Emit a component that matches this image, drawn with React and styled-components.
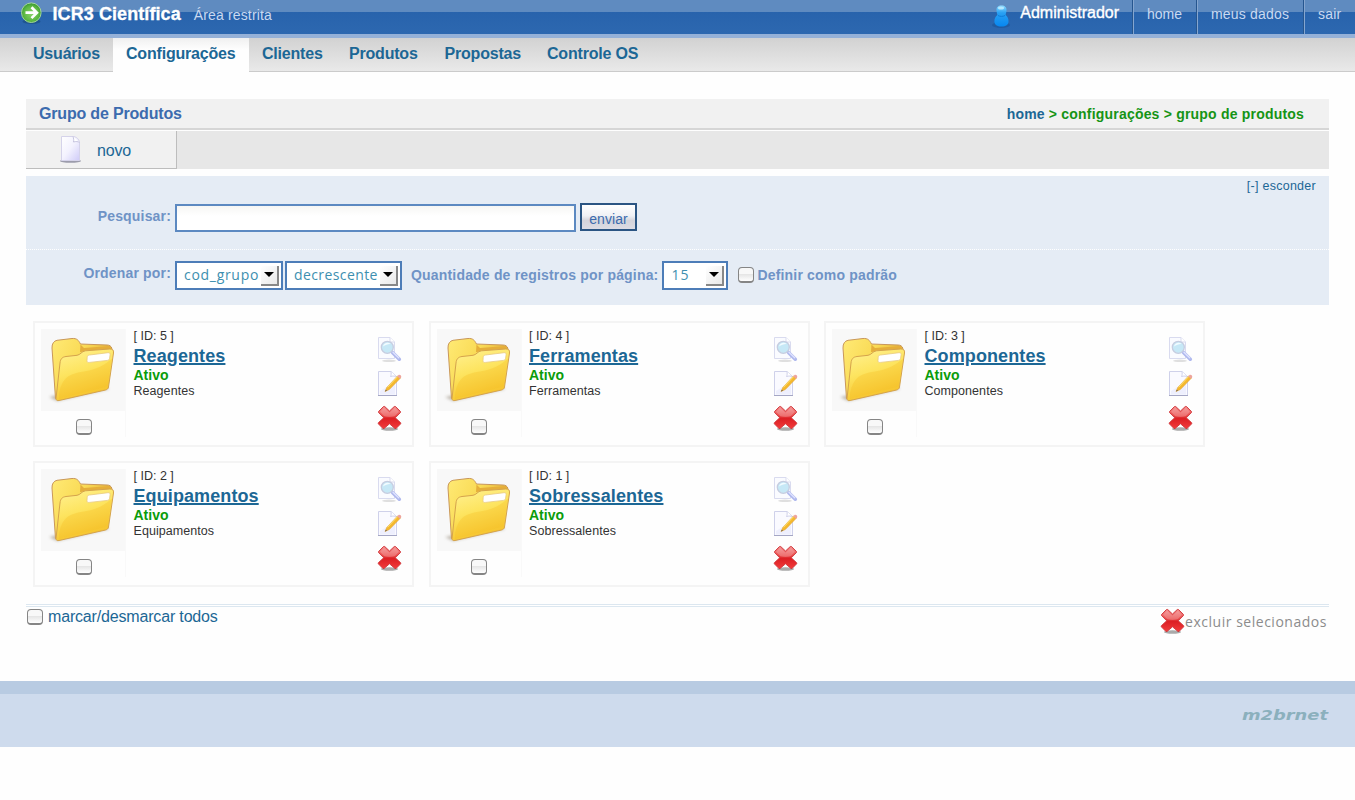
import React from "react";
import styled, { createGlobalStyle } from "styled-components";

const GlobalStyle = createGlobalStyle`
  * { box-sizing: border-box; }
  html, body { margin: 0; padding: 0; background: #fefefe; }
  body { font-family: "Liberation Sans", Arial, sans-serif; color: #333; overflow: hidden; }
  svg { display: block; flex: none; }
`;

const sans = `"Liberation Sans", Arial, sans-serif`;
const human = `"Open Sans", "Noto Sans", sans-serif`;

const Page = styled.div`
  width: 1355px;
  height: 800px;
  overflow: hidden;
`;

const Text = styled.span`
  font-family: ${(p) => p.$family || sans};
  font-size: ${(p) => p.$size}px;
  font-weight: ${(p) => (p.$bold ? 700 : 400)};
  letter-spacing: ${(p) => p.$track || 0}px;
  line-height: 20px;
  color: ${(p) => p.$color};
  white-space: nowrap;
`;

const Header = styled.header`
  height: 38px;
  display: flex;
  justify-content: space-between;
  align-items: flex-start;
  background: linear-gradient(#5f8bc0 0 12px, #2863ac 12px, #2d68b0 34px, #95b1d8 34px);
`;

const Brand = styled.div`
  display: flex;
  padding-left: 20px;
  height: 34px;
`;

const BrandName = styled(Text)`
  margin: 4px 13px 0 9.5px;
  -webkit-text-stroke: 0.3px #fff;
`;

const BrandArea = styled(Text)`
  padding-top: 5px;
`;

const UserNav = styled.nav`
  display: flex;
  height: 34px;
`;

const UserBox = styled.div`
  display: flex;
  padding-right: 14px;
`;

const PersonSlot = styled.div`
  padding-top: 4px;
`;

const UserName = styled(Text)`
  margin: 3px 0 0 9px;
  -webkit-text-stroke: 0.35px #fff;
`;

const NavLink = styled.a`
  width: ${(p) => p.$width}px;
  height: 34px;
  padding: 4px 0 0 13px;
  border-left: 1px solid #85a6d0;
  box-shadow: -1px 0 #26568f;
  white-space: nowrap;
`;

const Tabs = styled.nav`
  height: 34px;
  display: flex;
  padding-left: 20px;
  background: linear-gradient(#d2d2d2, #e9e9e9);
  border-bottom: 1px solid #cbcbcb;
`;

const Tab = styled.a`
  width: ${(p) => p.$width}px;
  height: 34px;
  padding: 6px 0 0 13px;
  background: ${(p) => (p.$active ? "linear-gradient(#f0f0f0, #fefefe 12px)" : "none")};
`;

const Content = styled.main`
  padding: 27px 26px 0;
`;

const TitleBar = styled.div`
  height: 31px;
  display: flex;
  justify-content: space-between;
  padding: 5px 25px 0 13px;
  background: #f1f1f1;
  border-bottom: 2px solid #d6d6d6;
`;

const Toolbar = styled.div`
  margin-top: 1px;
  height: 38px;
  background: #e7e7e7;
`;

const ToolButton = styled.div`
  width: 151px;
  height: 38px;
  display: flex;
  gap: 15px;
  padding: 4px 0 0 33px;
  background: #f1f1f1;
  border: solid #bdbdbd;
  border-width: 0 1px 1px 0;
`;

const ToolLabel = styled(Text)`
  padding-top: 6px;
`;

const Filters = styled.section`
  margin-top: 7px;
  height: 129px;
  background: #e5ecf5;
`;

const SearchBlock = styled.div`
  height: 74px;
  border-bottom: 1px dotted #fff;
`;

const HideRow = styled.div`
  display: flex;
  justify-content: flex-end;
  height: 27px;
  padding-right: 13px;
`;

const FieldRow = styled.div`
  display: flex;
  align-items: flex-start;
  padding-top: ${(p) => p.$top || 0}px;
`;

const FieldLabel = styled(Text)`
  width: 149px;
  padding: ${(p) => p.$drop}px 4px 0 0;
  text-align: right;
`;

const SearchInput = styled.input`
  width: 401px;
  height: 28px;
  margin-top: 1px;
  border: 2px solid #5c89c1;
  border-radius: 0;
  outline: none;
  background: linear-gradient(#f6f6f4, #fff 10px);
`;

const SendButton = styled.button`
  width: 57px;
  height: 28px;
  margin-left: 4px;
  padding: 4px 0 0;
  border: 2px solid #2b5583;
  background: linear-gradient(#fff, #f0f1f5 45%, #d4d4db 65%, #dcdce4);
`;

const Select = styled.div`
  width: ${(p) => p.$width}px;
  height: 29px;
  margin-right: ${(p) => p.$gap}px;
  display: flex;
  justify-content: space-between;
  padding: 2px 2px 0 7px;
  border: 2px solid #4d7db8;
  background: #fff;
`;

const ArrowBox = styled.span`
  width: 18px;
  height: 20px;
  margin-top: 1px;
  display: flex;
  justify-content: center;
  padding-top: 6px;
  background: linear-gradient(135deg, #fff, #e9e9e9);
  border: solid #888;
  border-width: 0 2px 2px 0;
`;

const PageLabel = styled(Text)`
  padding: 4px 4px 0 0;
`;

const CheckSquare = styled.span`
  display: block;
  flex: none;
  width: 16px;
  height: 16px;
  border: 1.5px solid #858585;
  border-bottom-width: 2px;
  border-radius: 4px;
  background: linear-gradient(#f8f8f8 45%, #e6e6e6 50%, #fff);
`;

const DefaultCheck = styled.div`
  display: flex;
  gap: 3px;
  padding: 6px 0 0;
  & > :last-child { margin-top: -2px; }
`;

const Cards = styled.section`
  display: grid;
  grid-template-columns: repeat(3, 381px);
  column-gap: 14.5px;
  row-gap: 14px;
  padding: 16px 0 0 7px;
`;

const Card = styled.article`
  height: 126px;
  display: flex;
  padding: 6px 6px;
  border: 2px solid #f4f4f4;
  background: #fefefe;
`;

const Thumb = styled.div`
  width: 85px;
  height: 108px;
  display: flex;
  flex-direction: column;
  align-items: center;
  gap: 8px;
  border-right: 1px solid #f9f9f9;
`;

const ThumbPicture = styled.div`
  width: 84px;
  height: 82px;
  background: #f8f8f8;
`;

const ThumbCheck = styled.div`
  padding-left: 1px;
`;

const CardBody = styled.div`
  flex: 1;
  display: flex;
  flex-direction: column;
  align-items: flex-start;
  padding-left: 7.5px;
`;

const CardLine = styled(Text)`
  line-height: ${(p) => p.$line}px;
  text-decoration: ${(p) => (p.$link ? "underline" : "none")};
  text-decoration-thickness: 2px;
  text-underline-offset: 1px;
`;

const Actions = styled.div`
  display: flex;
  flex-direction: column;
  gap: 7px;
  padding: 7px 3px 0 0;
`;

const BulkBar = styled.div`
  margin-top: 17px;
  height: 77px;
  border-top: 1px solid #dce7f0;
  box-shadow: inset 0 1px #fff, inset 0 2px #dce7f0;
  display: flex;
  justify-content: space-between;
`;

const MarkAll = styled.label`
  display: flex;
  gap: 5px;
  padding: 4px 0 0 1px;
  & > :last-child { margin-top: -2px; }
`;

const DeleteSelected = styled.a`
  display: flex;
  padding: 2px 2px 0 0;
  & > :last-child { padding-top: 5px; margin-left: -1px; }
`;

const Footer = styled.footer`
  height: 66px;
  border-top: 13px solid #b8cbe2;
  background: #cedbed;
  display: flex;
  justify-content: flex-end;
  padding: 11px 26px 0 0;
`;

const GreenArrow = () => (
  <svg width="23" height="24" viewBox="0 0 23 24">
    <defs>
      <radialGradient id="ga" cx="50%" cy="55%" r="55%">
        <stop offset="0" stopColor="#8bd36a" /><stop offset=".7" stopColor="#5bb741" /><stop offset="1" stopColor="#35942f" />
      </radialGradient>
    </defs>
    <ellipse cx="11.5" cy="21.500" rx="9" ry="2.500" fill="#174a7c" opacity=".6" />
    <circle cx="11.3" cy="12.7" r="9.800" fill="url(#ga)" stroke="#a3d798" strokeWidth="1" />
    <path d="M5.5 12.700h11M11.500 7.300l5.400 5.400-5.400 5.400" fill="none" stroke="#fff" strokeWidth="2.700" />
  </svg>
);

const Person = () => (
  <svg width="20" height="24" viewBox="0 0 20 24">
    <defs>
      <linearGradient id="pe" x1="0" y1="0" x2="0" y2="1">
        <stop offset="0" stopColor="#8fdcff" /><stop offset=".35" stopColor="#28a0f3" /><stop offset="1" stopColor="#0787f0" />
      </linearGradient>
    </defs>
    <ellipse cx="10" cy="21" rx="9" ry="3" fill="#164f94" opacity=".5" />
    <path d="M10.500 1.500c3.500 0 5.300 2 5 5-.1 2-.8 3-.9 4.500 2 1.500 3 3.500 2.900 6.500-.1 3.500-2.500 5-7 5s-7-1.500-7.100-5c-.1-3 1-5 3-6.500-.1-1.500-.8-2.500-.9-4.500-.3-3 1.500-5 5-5z" fill="url(#pe)" />
    <path d="M7 11.500c2.200 1.200 4.800 1.200 7 0" stroke="#0c7cd8" fill="none" strokeWidth="1" />
    <ellipse cx="10" cy="4" rx="3" ry="1.500" fill="#c8f0ff" opacity=".8" />
  </svg>
);

const BlankPage = () => (
  <svg width="23" height="29" viewBox="0 0 23 29">
    <defs>
      <linearGradient id="bp" x1="0" y1="0" x2="1" y2="1">
        <stop offset="0" stopColor="#fff" /><stop offset=".5" stopColor="#f3f2fe" /><stop offset="1" stopColor="#cfcbf8" />
      </linearGradient>
    </defs>
    <ellipse cx="11.500" cy="26" rx="10.500" ry="1.700" fill="#77778f" opacity=".7" />
    <path d="M2.500 1.500h12.500c3 .8 5 3 5.500 5.500v18.500h-18z" fill="url(#bp)" stroke="#d5d3ea" />
    <path d="M14 1.500c.8 2 .8 3.500.5 5.500 2.500-.8 4.500-.5 6 .5" fill="#fff" stroke="#c6c4df" />
  </svg>
);

const Folder = () => (
  <svg width="84" height="82" viewBox="0 0 84 82">
    <defs>
      <linearGradient id="fb" x1="0" y1="0" x2="1" y2=".5">
        <stop offset="0" stopColor="#ffea75" /><stop offset=".5" stopColor="#f9da55" /><stop offset="1" stopColor="#e0a62c" />
      </linearGradient>
      <linearGradient id="ff" x1="0" y1="0" x2=".35" y2="1">
        <stop offset="0" stopColor="#fff296" /><stop offset=".5" stopColor="#fde45f" /><stop offset="1" stopColor="#f6c32c" />
      </linearGradient>
      <filter id="fs" x="-30%" y="-30%" width="160%" height="160%"><feGaussianBlur stdDeviation="1.600" /></filter>
    </defs>
    <path d="M8 68l8 4 52-12-5-4z" fill="#887b68" opacity=".5" filter="url(#fs)" />
    <path d="M14.500 69.500L11 19c-.2-4.500 2-7 5-7.700l15-1.800c5-.4 6.500 1.800 8.500 5.500L66 16c2.500 0 4 1.200 4.800 3v5L24 67z" fill="url(#fb)" stroke="#c9975a" strokeWidth="1" />
    <path d="M39.500 15.500l3.500 3.500 26-2v4l-30 2z" fill="#e5ae3a" />
    <path d="M15 69.500L19 34c.5-4.500 2.500-6 6-6.500l11-1.200c3.500-.4 4.500-4 8.500-4.500L68.500 20c3.200-.2 4.300 1 4 4l-5 34c-.3 2-1.500 2.500-3 3l-46.500 10.500c-2 .5-3-.5-3-2z" fill="url(#ff)" stroke="#d5a34c" strokeWidth="1" />
    <path d="M18 65c3-15 8-20 25-22.500 15-2.500 21-7 28-13l-4.500 28-48.500 12.500z" fill="#f6bd22" opacity=".3" />
    <path d="M48.500 26l18.500-2.300c1.500-.1 2.300.5 2.100 2l-.5 3.500c-.2 1.500-1 2-2.300 2.200l-17.800 2c-1.800.2-2.600-.3-2.500-2l.2-3.100c.1-1.500.9-2.100 2.300-2.300z" fill="#fff" stroke="#e8ca82" strokeWidth=".8" />
  </svg>
);

const Magnifier = () => (
  <svg width="26" height="27" viewBox="0 0 26 27">
    <ellipse cx="12" cy="24.800" rx="7" ry="1.200" fill="#999" opacity=".3" />
    <path d="M1.500 1.500h11.500l4.500 4.500v16.500h-16z" fill="#fafbff" stroke="#d9dbef" />
    <path d="M13 1.500v4.500h4.500" fill="#fff" stroke="#d9dbef" />
    <path d="M15.500 16.500l6.800 6.700" stroke="#b0b9ee" strokeWidth="3.600" strokeLinecap="round" />
    <path d="M16 16.300l5.700 5.500" stroke="#dfe3ff" strokeWidth="1.400" strokeLinecap="round" />
    <circle cx="10.300" cy="11.300" r="6" fill="#c6e8f6" stroke="#c6cde0" strokeWidth="1.300" />
    <path d="M6 10.500c.8-3.700 5-4.700 7.700-2.500-2.500-.2-5.200.8-7.700 2.500z" fill="#f1fbff" />
  </svg>
);

const PencilPage = () => (
  <svg width="26" height="27" viewBox="0 0 26 27">
    <path d="M1.500 1.500h12.500l5.500 5v19h-18z" fill="#fafaff" stroke="#cfd1ea" />
    <path d="M3 21l15-9v12.500H3z" fill="#e6e7fb" opacity=".6" />
    <path d="M14 1.500c.3 2.200.2 3.700-.5 5 2.300-.7 4.500-.5 6 .2" fill="#fff" stroke="#cfd1ea" />
    <path d="M1 25.500h19" stroke="#a5a7c5" />
    <path d="M8 21.500l2-4.300L20.500 6l2.800 2.200L12.300 19.500z" fill="#f5b92d" stroke="#df9f34" strokeWidth=".6" />
    <path d="M10.500 17.300L20.900 6.300" stroke="#ffe47c" strokeWidth="1" />
    <path d="M20.200 6.300l1.300-1.300c1.400-.8 3.300.8 2.600 2.300L22.800 8.700z" fill="#eda49c" />
    <path d="M8 21.500l.9-1.800 1.100.9z" fill="#555" />
  </svg>
);

const RedCross = () => (
  <svg width="26" height="28" viewBox="0 0 26 28">
    <defs>
      <linearGradient id="rc" x1="0" y1="0" x2="0" y2="1">
        <stop offset="0" stopColor="#f28888" /><stop offset=".4" stopColor="#ea4c4c" /><stop offset=".55" stopColor="#dc1f24" /><stop offset="1" stopColor="#f23b3b" />
      </linearGradient>
    </defs>
    <ellipse cx="12.500" cy="25" rx="8.500" ry="1.800" fill="#555" opacity=".5" />
    <path d="M1.500 7.500L6.500 2.500h1.200L12.500 7l4.800-4.500h1.200L23.500 7.500v1L18.300 13.800l5.400 5v1L19 24.500h-1L12.500 19.800 7 24.500H6L1.300 19.800v-1l5.400-5L1.500 8.500z" fill="url(#rc)" stroke="#cf3439" strokeWidth=".9" strokeLinejoin="round" />
    <path d="M3 7.700l4-4 5.500 4.800 5.500-4.800L22 7.700l-4.300 4.600c-3 .8-7.400.8-10.400 0z" fill="#fff" opacity=".22" />
  </svg>
);

const Signature = () => (
  <svg width="88" height="20" viewBox="0 0 88 20">
    <text x="1" y="14.500" textLength="86" lengthAdjust="spacingAndGlyphs"
      fontFamily="DejaVu Sans" fontStyle="italic" fontWeight="700" fontSize="14.500" fill="#8bb0bd">m2brnet</text>
  </svg>
);

const Dropdown = ({ width, gap, children, track }) => (
  <Select $width={width} $gap={gap}>
    <Text $family={human} $size={14} $track={track} $color="#3d8fb0">{children}</Text>
    <ArrowBox>
      <svg width="10" height="5" viewBox="0 0 10 5"><path d="M0 0h10L5 5z" fill="#000" /></svg>
    </ArrowBox>
  </Select>
);

const tabs = [
  ["Usuários", 93],
  ["Configurações", 136],
  ["Clientes", 87],
  ["Produtos", 95.5],
  ["Propostas", 102.5],
  ["Controle OS", 120],
];

const groups = [
  [5, "Reagentes"],
  [4, "Ferramentas"],
  [3, "Componentes"],
  [2, "Equipamentos"],
  [1, "Sobressalentes"],
];

export default function App() {
  return (
    <Page>
      <GlobalStyle />
      <Header>
        <Brand>
          <GreenArrow />
          <BrandName $size={18} $bold $color="#fff" $track={0.08}>ICR3 Científica</BrandName>
          <BrandArea $size={14} $color="#c9d9f0" $track={0.15}>Área restrita</BrandArea>
        </Brand>
        <UserNav>
          <UserBox>
            <PersonSlot><Person /></PersonSlot>
            <UserName $size={16} $color="#fff">Administrador</UserName>
          </UserBox>
          <NavLink $width={64}><Text $size={14} $color="#c9d9f0">home</Text></NavLink>
          <NavLink $width={107}><Text $size={14} $track={0.2} $color="#c9d9f0">meus dados</Text></NavLink>
          <NavLink $width={51}><Text $size={14} $track={0.2} $color="#c9d9f0">sair</Text></NavLink>
        </UserNav>
      </Header>
      <Tabs>
        {tabs.map(([label, width]) => (
          <Tab key={label} $width={width} $active={label === "Configurações"}>
            <Text $size={16} $bold $track={-0.2} $color="#1c6795">{label}</Text>
          </Tab>
        ))}
      </Tabs>
      <Content>
        <TitleBar>
          <Text $size={16} $bold $track={-0.18} $color="#3c6bae">Grupo de Produtos</Text>
          <Text $size={14} $bold $track={0.2} $color="#159415">
            <Text as="a" $size={14} $bold $track={0.2} $color="#1c6795">home</Text> &gt; configurações &gt; grupo de produtos
          </Text>
        </TitleBar>
        <Toolbar>
          <ToolButton>
            <BlankPage />
            <ToolLabel $size={16} $track={-0.15} $color="#1c6795">novo</ToolLabel>
          </ToolButton>
        </Toolbar>
        <Filters>
          <SearchBlock>
            <HideRow><Text $size={12.5} $track={0.27} $color="#1c6795">[-] esconder</Text></HideRow>
            <FieldRow>
              <FieldLabel $drop={3} $size={14} $bold $track={0.17} $color="#6f93c6">Pesquisar:</FieldLabel>
              <SearchInput />
              <SendButton><Text $size={14} $track={0.1} $color="#3c6bae">enviar</Text></SendButton>
            </FieldRow>
          </SearchBlock>
          <FieldRow $top={11}>
            <FieldLabel $drop={2} $size={14} $bold $track={0.17} $color="#6f93c6">Ordenar por:</FieldLabel>
            <Dropdown width={108} gap={2} track={0.7}>cod_grupo</Dropdown>
            <Dropdown width={117} gap={9} track={0.4}>decrescente</Dropdown>
            <PageLabel $size={14} $bold $track={0.18} $color="#6f93c6">Quantidade de registros por página:</PageLabel>
            <Dropdown width={66} gap={10} track={1}>15</Dropdown>
            <DefaultCheck>
              <CheckSquare />
              <Text $size={14} $bold $track={0.18} $color="#6f93c6">Definir como padrão</Text>
            </DefaultCheck>
          </FieldRow>
        </Filters>
        <Cards>
          {groups.map(([id, name]) => (
            <Card key={id}>
              <Thumb>
                <ThumbPicture><Folder /></ThumbPicture>
                <ThumbCheck><CheckSquare /></ThumbCheck>
              </Thumb>
              <CardBody>
                <CardLine $line={15} $size={12.5} $color="#333">[ ID: {id} ]</CardLine>
                <CardLine as="a" $link $line={24} $size={18} $bold $track={0.1} $color="#1c6795">{name}</CardLine>
                <CardLine $line={15} $size={14} $bold $color="#0a9c0a">Ativo</CardLine>
                <CardLine $line={17} $size={12.5} $track={0.06} $color="#333">{name}</CardLine>
              </CardBody>
              <Actions>
                <Magnifier />
                <PencilPage />
                <RedCross />
              </Actions>
            </Card>
          ))}
        </Cards>
        <BulkBar>
          <MarkAll>
            <CheckSquare />
            <Text $size={16} $track={-0.17} $color="#1c6795">marcar/desmarcar todos</Text>
          </MarkAll>
          <DeleteSelected>
            <RedCross />
            <Text $family={human} $size={14} $track={0.52} $color="#8c8c8c">excluir selecionados</Text>
          </DeleteSelected>
        </BulkBar>
      </Content>
      <Footer><Signature /></Footer>
    </Page>
  );
}
